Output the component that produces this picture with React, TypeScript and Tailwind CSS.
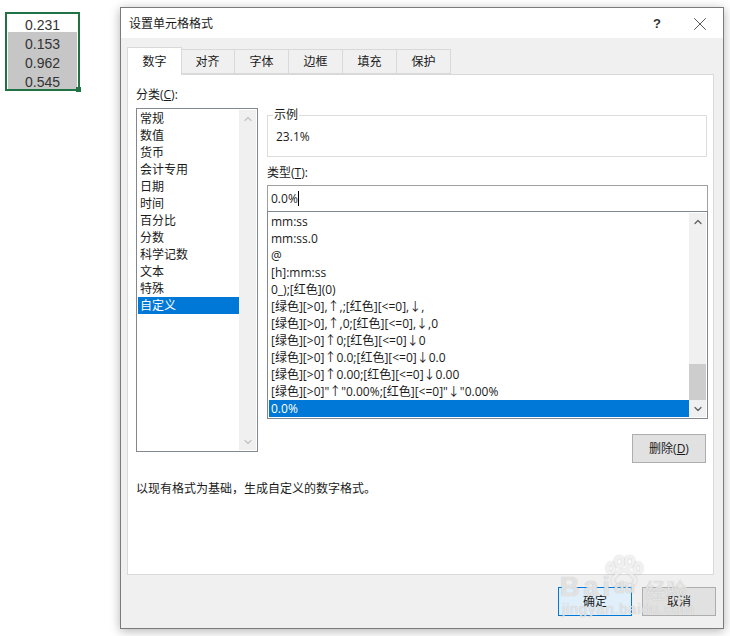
import { ChevronUp, ChevronDown, X } from "lucide-react";

const FONT = "font-['Open_Sans','Noto_Sans_CJK_SC',sans-serif]";

const cells = ["0.231", "0.153", "0.962", "0.545"];
const categories = ["常规", "数值", "货币", "会计专用", "日期", "时间", "百分比", "分数", "科学记数", "文本", "特殊", "自定义"];
const formats = [
  "mm:ss",
  "mm:ss.0",
  "@",
  "[h]:mm:ss",
  "0_);[红色](0)",
  "[绿色][>0],↑,;[红色][<=0],↓,",
  "[绿色][>0],↑,0;[红色][<=0],↓,0",
  "[绿色][>0]↑0;[红色][<=0]↓0",
  "[绿色][>0]↑0.0;[红色][<=0]↓0.0",
  "[绿色][>0]↑0.00;[红色][<=0]↓0.00",
  "[绿色][>0]\"↑\"0.00%;[红色][<=0]\"↓\"0.00%",
  "0.0%",
];
const tabs = ["数字", "对齐", "字体", "边框", "填充", "保护"];

function Tab({ label, active }: { label: string; active: boolean }) {
  if (active) {
    return (
      <div className="z-10 -mb-px -mr-px flex h-[28px] w-[55px] items-center justify-center border border-b-0 border-[#d9d9d9] bg-white text-[12px]">
        {label}
      </div>
    );
  }
  return (
    <div className="-ml-px mt-[2px] flex h-[25px] w-[55px] items-center justify-center border border-[#d9d9d9] bg-[#f0f0f0] text-[12px]">
      {label}
    </div>
  );
}

function Scrollbar({ dim, thumb }: { dim: boolean; thumb: boolean }) {
  const arrow = dim ? "text-[#c4c4c4]" : "text-[#606060]";
  return (
    <div className="flex w-[17px] shrink-0 flex-col bg-[#f0f0f0]">
      <div className={`flex h-[17px] items-center justify-center ${arrow}`}>
        <ChevronUp size={12} strokeWidth={2.5} />
      </div>
      <div className="flex flex-1 flex-col justify-end">
        {thumb && <div className="h-[36px] bg-[#cdcdcd]" />}
      </div>
      <div className={`flex h-[17px] items-center justify-center ${arrow}`}>
        <ChevronDown size={12} strokeWidth={2.5} />
      </div>
    </div>
  );
}

function Watermark() {
  return (
    <div className="pointer-events-none absolute left-[560px] top-[556px] h-[64px] w-[132px] text-white/65 [text-shadow:0_0_1px_#a8a8a8]">
      <svg width="38" height="32" viewBox="0 0 40 34" className="absolute left-[45px] top-0 drop-shadow-[0_0_1px_#aaa]" fill="none" stroke="currentColor" strokeWidth="3">
        <ellipse cx="6" cy="13" rx="3.5" ry="5" />
        <ellipse cx="15" cy="6" rx="4" ry="5" />
        <ellipse cx="26" cy="6" rx="4" ry="5" />
        <ellipse cx="35" cy="13" rx="3.5" ry="5" />
        <path d="M20 15c-5 0-7 4-10 7-4 4-1 10 5 9 3-1 6-1 10 0 6 1 9-5 5-9-3-3-5-7-10-7z" />
      </svg>
      <div className="absolute left-0 top-[17px] font-['Liberation_Sans',sans-serif] text-[27px] font-bold leading-[28px] tracking-[4px]">Bai</div>
      <div className="absolute left-[54px] top-[23px] font-['Liberation_Sans',sans-serif] text-[17px] font-bold leading-[18px]">du</div>
      <div className="absolute left-[85px] top-[21px] font-['Noto_Sans_CJK_SC',sans-serif] text-[21px] leading-[25px]">经验</div>
      <div className="absolute left-[2px] top-[44px] font-['Liberation_Sans',sans-serif] text-[15px] leading-[18px] tracking-[0.7px]">jingyan.baidu.com</div>
    </div>
  );
}

export default function App() {
  return (
    <div className={`relative flex h-[636px] w-[730px] items-start overflow-hidden bg-white text-[#1a1a1a] ${FONT}`}>
      {/* selected cells in the sheet */}
      <div className="relative ml-[5px] mt-[12px] h-[79px] w-[75px] border-2 border-[#217346] font-['Liberation_Sans',sans-serif] text-[14px] text-[#333]">
        {cells.map((v, i) => (
          <div key={v} className={`mx-px text-center ${i > 0 ? "h-[19px] bg-[#c6c6c6] leading-[24px]" : "h-[18px] leading-[22px]"} ${i === 3 ? "overflow-hidden" : ""}`}>
            {v}
          </div>
        ))}
        <div className="absolute -bottom-[3px] -right-[3px] size-[5px] bg-[#217346]" />
      </div>

      {/* dialog */}
      <div className="ml-[40px] mt-[7px] flex h-[622px] w-[604px] flex-col border border-[#7a7a7a] bg-[#f0f0f0] shadow-[0_2px_10px_rgba(0,0,0,0.3)]">
        <div className="flex h-[30px] shrink-0 items-center bg-white pl-[8px] pt-[1px] text-[12px]">
          <span className="flex-1">设置单元格格式</span>
          <span className="mr-[28px] font-['Liberation_Sans',sans-serif] text-[13px] font-bold text-[#333]">?</span>
          <X size={22} strokeWidth={0.8} className="mr-[12px]" />
        </div>

        <div className="flex flex-1 flex-col pl-[6px] pr-[9px] pt-[8px]">
          <div className="flex h-[28px] items-end">
            {tabs.map((t, i) => (
              <Tab key={t} label={t} active={i === 0} />
            ))}
          </div>

          <div className="flex h-[501px] flex-col border border-[#d9d9d9] bg-white pl-[8px] pr-[6px] text-[12px]">
            <div className="mt-[11px] leading-[17px]">分类(<span className="underline">C</span>):</div>
            <div className="mt-[5px] flex">
              <div className="flex h-[344px] w-[122px] shrink-0 border border-[#828790] p-px">
                <div className="flex-1">
                  {categories.map((c, i) => (
                    <div key={c} className={`h-[17px] pl-[2px] leading-[17px] ${i === 11 ? "bg-[#0078d7] text-white" : ""}`}>
                      {c}
                    </div>
                  ))}
                </div>
                <Scrollbar dim thumb={false} />
              </div>

              <div className="ml-[9px] flex-1">
                <div className="relative mt-[7px] flex h-[42px] w-[440px] items-center border border-[#dcdcdc] pl-[8px]">
                  <span className="absolute -top-[9px] left-[5px] bg-white px-px leading-[15px]">示例</span>
                  <span className="mt-[2px]">23.1%</span>
                </div>
                <div className="mt-[7px] leading-[17px]">类型(<span className="underline">T</span>):</div>
                <div className="mt-[4px] flex h-[27px] w-[441px] items-center border border-[#a0a0a0] pl-[3px]">
                  0.0%<span className="h-[15px] w-px bg-black" />
                </div>
                <div className="-mt-px flex h-[208px] w-[441px] border border-[#828790] p-px">
                  <div className="flex-1">
                    {formats.map((f, i) => (
                      <div key={f} className={`h-[17px] pl-[2px] leading-[17px] ${i === 11 ? "bg-[#0078d7] text-white" : ""}`}>
                        {f}
                      </div>
                    ))}
                  </div>
                  <Scrollbar dim={false} thumb />
                </div>
                <div className="mt-[15px] flex w-[439px] justify-end">
                  <button className="h-[29px] w-[74px] border border-[#adadad] bg-[#e1e1e1] text-[12px]">
                    删除(<span className="underline">D</span>)
                  </button>
                </div>
              </div>
            </div>
            <div className="mt-[17px] leading-[17px]">以现有格式为基础，生成自定义的数字格式。</div>
          </div>

          <div className="mt-[12px] flex justify-end gap-[10px]">
            <button className="h-[29px] w-[74px] border border-[#0078d7] bg-[#e1effa] text-[12px]">确定</button>
            <button className="-mr-[2px] h-[29px] w-[74px] border border-[#adadad] bg-[#e1e1e1] text-[12px]">取消</button>
          </div>
        </div>
      </div>

      <Watermark />
    </div>
  );
}
